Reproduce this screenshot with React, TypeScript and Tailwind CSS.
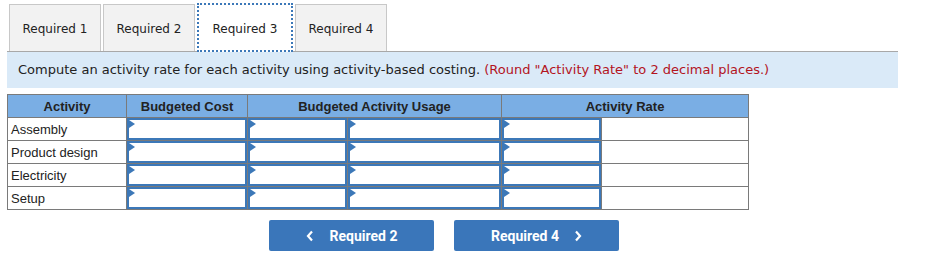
import React from "react";

const rows = ["Assembly", "Product design", "Electricity", "Setup"];

function InputCell() {
  return (
    <td className="border border-[#7a7a7a] p-0 h-[23px]">
      <div className="relative h-[22px] border-2 border-[#3c78b8] bg-white">
        <svg className="absolute left-0 top-0" width="6" height="8" viewBox="0 0 6 8">
          <polygon points="0,0 6,4 0,8" fill="#3c78b8" />
        </svg>
      </div>
    </td>
  );
}

export default function App() {
  const tabs = ["Required 1", "Required 2", "Required 3", "Required 4"];
  return (
    <div className="w-[939px] h-[268px] bg-white font-['DejaVu_Sans',sans-serif] text-[#222]">
      <div className="pl-[9px] pt-[4px] flex items-end gap-[2px] h-[51px]">
        {tabs.map((t, i) =>
          i === 2 ? (
            <div
              key={t}
              className="relative z-10 -mb-[1px] h-[49px] w-[96px] border-2 border-dotted border-[#3c78b8] bg-white flex items-center justify-center pt-[2px] text-[12px] text-[#222]"
            >
              {t}
            </div>
          ) : (
            <div
              key={t}
              className="h-[47px] w-[92px] border border-b-0 border-[#c8c8c8] bg-[#f2f2f2] flex items-center justify-center pt-[2px] text-[12px] text-[#222]"
            >
              {t}
            </div>
          )
        )}
      </div>
      <div className="mx-[7px] w-[891px] border-t border-[#a8a8a8] bg-[#daeaf8] h-[37px] flex items-center pl-[11px] text-[13px] text-[#222]">
        Compute an activity rate for each activity using activity-based costing.&nbsp;
        <span className="text-[#b3141e]">(Round "Activity Rate" to 2 decimal places.)</span>
      </div>
      <div className="pl-[7px] pt-[6px]">
        <table className="border-collapse font-['Liberation_Sans',Arial,sans-serif] text-[13px] text-[#222] w-[741px] table-fixed">
          <colgroup>
            <col className="w-[119px]" />
            <col className="w-[121px]" />
            <col className="w-[100px]" />
            <col className="w-[154px]" />
            <col className="w-[100px]" />
            <col className="w-[147px]" />
          </colgroup>
          <thead>
            <tr className="bg-[#7aaee4] h-[23px]">
              <th className="border border-[#7a7a7a] font-bold text-center p-0 pt-[1px]">Activity</th>
              <th className="border border-[#7a7a7a] font-bold text-center p-0 pt-[1px]">Budgeted Cost</th>
              <th colSpan={2} className="border border-[#7a7a7a] font-bold text-center p-0 pt-[1px]">
                Budgeted Activity Usage
              </th>
              <th colSpan={2} className="border border-[#7a7a7a] font-bold text-center p-0 pt-[1px]">
                Activity Rate
              </th>
            </tr>
          </thead>
          <tbody>
            {rows.map((r) => (
              <tr key={r} className="h-[23px]">
                <td className="border border-[#7a7a7a] pl-[3px] pt-[2px] pb-0 text-left">{r}</td>
                <InputCell />
                <InputCell />
                <InputCell />
                <InputCell />
                <td className="border border-[#7a7a7a] p-0"></td>
              </tr>
            ))}
          </tbody>
        </table>
      </div>
      <div className="flex gap-[20px] pl-[269px] pt-[10px] font-['Roboto',sans-serif]">
        <button className="w-[165px] h-[31px] rounded-[2px] bg-[#3a76ba] text-white text-[14px] font-bold flex items-center justify-center gap-[16px] pt-[1px]">
          <svg width="8" height="12" viewBox="0 0 8 12">
            <polyline points="6,1.5 2,6 6,10.5" fill="none" stroke="white" strokeWidth="2.2" />
          </svg>
          <span>Required 2</span>
        </button>
        <button className="w-[165px] h-[31px] rounded-[2px] bg-[#3a76ba] text-white text-[14px] font-bold flex items-center justify-center gap-[15px] pt-[1px]">
          <span>Required 4</span>
          <svg width="8" height="12" viewBox="0 0 8 12">
            <polyline points="2,1.5 6,6 2,10.5" fill="none" stroke="white" strokeWidth="2.2" />
          </svg>
        </button>
      </div>
    </div>
  );
}
